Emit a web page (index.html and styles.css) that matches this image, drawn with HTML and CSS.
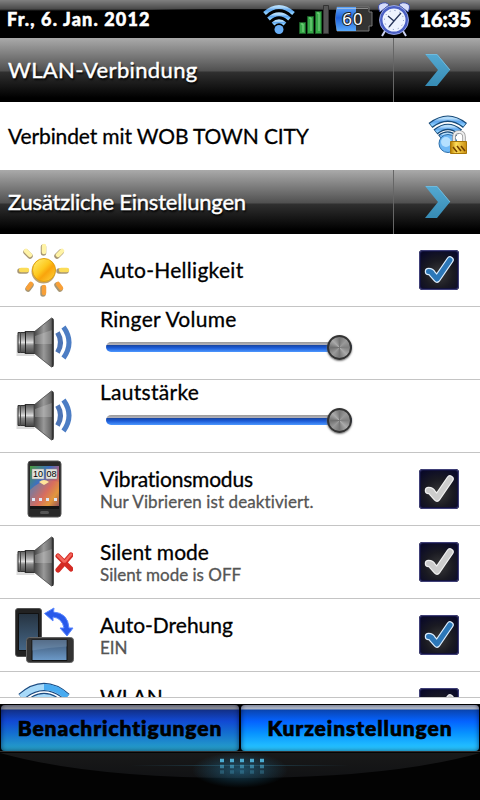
FILE: index.html
```html
<!DOCTYPE html>
<html lang="de">
<head>
  <meta charset="UTF-8">
  <meta name="viewport" content="width=device-width, initial-scale=1.0">
  <title>Kurzeinstellungen</title>
  <link rel="stylesheet" href="styles.css">
</head>
<body>
  <svg class="defs" width="0" height="0">
    <defs>
      <linearGradient id="blue" x1="0" y1="0" x2="0" y2="1">
        <stop offset="0" stop-color="#b4dcfa"/><stop offset=".5" stop-color="#5ca4ee"/><stop offset="1" stop-color="#8dcfff"/>
      </linearGradient>
      <linearGradient id="arrow" x1="0" y1="0" x2="0" y2="1">
        <stop offset="0" stop-color="#54a9d2"/><stop offset="1" stop-color="#368bb4"/>
      </linearGradient>
      <linearGradient id="metal" x1="0" y1="0" x2="0" y2="1">
        <stop offset="0" stop-color="#555"/><stop offset=".35" stop-color="#aaa"/><stop offset=".5" stop-color="#ddd"/><stop offset=".62" stop-color="#888"/><stop offset="1" stop-color="#444"/>
      </linearGradient>
      <linearGradient id="cone" x1="0" y1="0" x2="1" y2="0">
        <stop offset="0" stop-color="#444"/><stop offset=".5" stop-color="#999"/><stop offset="1" stop-color="#555"/>
      </linearGradient>
      <linearGradient id="screen" x1="0" y1="0" x2="0" y2="1">
        <stop offset="0" stop-color="#3d5470"/><stop offset="1" stop-color="#6c9ac9"/>
      </linearGradient>
      <linearGradient id="darkscreen" x1="0" y1="0" x2="0" y2="1">
        <stop offset="0" stop-color="#263340"/><stop offset="1" stop-color="#456686"/>
      </linearGradient>
      <linearGradient id="sunfill" x1="0" y1="0" x2="1" y2="1">
        <stop offset="0" stop-color="#fff27a"/><stop offset=".45" stop-color="#fdc81e"/><stop offset=".6" stop-color="#f9a40c"/><stop offset="1" stop-color="#ffd83c"/>
      </linearGradient>
      <linearGradient id="wall" x1="0" y1="0" x2="1" y2="1">
        <stop offset="0" stop-color="#4a9a3a"/><stop offset=".35" stop-color="#3d6fc4"/><stop offset=".6" stop-color="#c65a6a"/><stop offset=".8" stop-color="#d8a030"/><stop offset="1" stop-color="#5a3060"/>
      </linearGradient>
      <linearGradient id="battery" x1="0" y1="0" x2="0" y2="1">
        <stop offset="0" stop-color="#5da4f8"/><stop offset=".45" stop-color="#1f62dc"/><stop offset="1" stop-color="#59a9fa"/>
      </linearGradient>
      <linearGradient id="gold" x1="0" y1="0" x2="1" y2="0">
        <stop offset="0" stop-color="#b77b00"/><stop offset=".35" stop-color="#ffe05a"/><stop offset="1" stop-color="#c98d10"/>
      </linearGradient>

      <symbol id="chevron" viewBox="0 0 26 32">
        <path d="M0 0h12l13 16-13 16H0l13-16z" fill="url(#arrow)"/>
        <path d="M1 .5h11l13 15.500" fill="none" stroke="#6fbadd"/>
      </symbol>

      <symbol id="speaker" viewBox="0 0 58 58">
        <path d="M2.500 19v21h18V18z" fill="#999" opacity=".35" transform="translate(-1 2)"/>
        <path d="M3 18.500h7v-1h10v22H10v-1H3z" fill="url(#metal)" stroke="#333"/>
        <path d="M10.500 18v21" stroke="#222"/>
        <path d="M5.500 18v21" stroke="#444"/>
        <path d="M19 18L36.500 4q2 0 2 3v43q0 3-2 3L19 39z" fill="url(#cone)" stroke="#444" stroke-width=".8"/>
        <path d="M20 22l17-6v14H20z" fill="#ddd" opacity=".28"/>
        <path d="M37.500 5v48" stroke="#333" stroke-width="1.500"/>
      </symbol>

      <symbol id="waves" viewBox="0 0 58 58">
        <g fill="none" stroke-width="5">
          <path d="M42.500 18.500q6 10 0 20" stroke="#4c74b5"/>
          <path d="M48.500 13q11 15.500 0 31" stroke="#4c7dc4"/>
        </g>
      </symbol>

      <symbol id="wifi" viewBox="0 0 32 32">
        <g fill="none" stroke="url(#blue)" stroke-width="4">
          <path d="M1.500 10.500Q16-2.500 30.500 10.500"/>
          <path d="M5.500 16Q16 6.500 26.500 16"/>
          <path d="M10 21q6-5.500 12 0"/>
        </g>
        <circle cx="16" cy="26.500" r="4.500" fill="#68adf4"/>
      </symbol>

      <symbol id="tick" viewBox="0 0 40 40">
        <path d="M9.500 21.500q3 0 4 2.500l4.500 5L31 10" fill="none" stroke-width="7.500" stroke-linejoin="round" stroke-linecap="round"/>
        <path d="M9.500 21.500q3 0 4 2.500l4.500 5L31 10" fill="none" stroke="currentColor" stroke-width="5" stroke-linejoin="round" stroke-linecap="round"/>
      </symbol>
    </defs>
  </svg>

  <div class="statusbar">
    <span class="date">Fr., 6. Jan. 2012</span>
    <div class="status-icons">
      <svg width="32" height="32"><use href="#wifi"/></svg>
      <svg width="32" height="30" viewBox="0 0 32 30">
        <g stroke="#1c5c28" fill="#35a747">
          <path d="M.5 18.500h6v11h-6z"/><path d="M8.500 12.500h6v17h-6z"/><path d="M16.500 7.500h6v22h-6z"/>
        </g>
        <path d="M24.500 1.500h5v28h-5z" fill="#555" stroke="#333"/>
        <path d="M2 20h2v8M10 14h2v13M18 9h2v18" fill="none" stroke="#83d889"/>
      </svg>
      <svg width="38" height="28" viewBox="0 0 38 28">
        <path d="M2 2h32v5h3v14h-3v5H2q-3-12 0-24" fill="#333" stroke="#777"/>
        <path d="M2 2h19v24H2q-3-12 0-24" fill="url(#battery)"/>
        <path d="M2 3.500h31" stroke="#ddd" opacity=".5"/>
        <text x="18" y="20" class="battery-text">60</text>
      </svg>
      <svg width="34" height="36" viewBox="0 0 34 36">
        <g stroke="#4152ac" fill="#d6dcfa">
          <path d="M3 11Q0 5 3 3q6-3 9 1z"/><path d="M31 11q3-6 0-8-6-3-9 1z"/>
        </g>
        <path d="M8 30l-3 5M26 30l3 5" stroke="#cbd2f2" stroke-width="2"/>
        <circle cx="17" cy="19" r="13" fill="#eef3ff" stroke="#4a5fc4" stroke-width="3"/>
        <circle cx="17" cy="19" r="14.500" fill="none" stroke="#aebcf5" stroke-width=".8"/>
        <circle cx="17" cy="19" r="9.500" fill="none" stroke="#7788b8" stroke-dasharray="1 4"/>
        <path d="M11 15l6 5 7-8M17 20l-5 6" fill="none" stroke="#28365c" stroke-width="1.300"/>
      </svg>
    </div>
    <span class="clock">16:35</span>
  </div>

  <div class="section-header">
    <h2 class="t-wlan">WLAN-Verbindung</h2>
    <div class="more"><svg width="26" height="32"><use href="#chevron"/></svg></div>
  </div>

  <div class="connection">
    <span>Verbindet mit WOB TOWN CITY</span>
    <svg width="40" height="42" viewBox="0 0 40 42">
      <g fill="none" stroke="#174a78" stroke-width="6.500">
        <path d="M2.500 10.500Q20-3 37 10.500"/><path d="M7.500 17Q20 7 32 17"/><path d="M12 22.500q8-6 15 0"/>
      </g>
      <g fill="none" stroke="url(#blue)" stroke-width="3.800">
        <path d="M3 10Q20-3 36.500 10"/><path d="M8 16.500Q20 7 31.500 16.500"/><path d="M12.500 22q7-5 14 0"/>
      </g>
      <circle cx="20" cy="28.500" r="9" fill="#70b9f5" stroke="#2a6daa"/>
      <circle cx="18" cy="27" r="5" fill="#b4e0ff"/>
      <path d="M26 27v-5q0-5 5-5t5 5v5" fill="none" stroke="#999" stroke-width="3.500"/>
      <path d="M26 27v-5q0-5 5-5t5 5v5" fill="none" stroke="#eee" stroke-width="1.800"/>
      <path d="M22.500 26.500h16v12h-16z" fill="url(#gold)" stroke="#a87708"/>
      <path d="M25 32l4 5M29 31l4 5M33 31l4 5" stroke="#744100" stroke-width="1.600"/>
    </svg>
  </div>

  <div class="section-header">
    <h2 class="t-extra">Zusätzliche Einstellungen</h2>
    <div class="more"><svg width="26" height="32"><use href="#chevron"/></svg></div>
  </div>

  <div class="settings">
    <div class="row">
      <svg class="icon" viewBox="0 0 58 58">
        <g stroke-linecap="round" stroke-width="5.500" stroke="#8a7445" opacity=".75">
          <path d="M28.500 6v6M42 15l4-4M44 30h7M42 44l3 4M28 47v6M16 44l-3 4M5 30h6M15 15l-4-4"/>
        </g>
        <g stroke-linecap="round" stroke-width="4.500">
          <path d="M29 5v6M43 14l4-4M15 14l-4-4" stroke="#fff3a6"/>
          <path d="M46 29h6M6 29h6" stroke="#fbdc58"/>
          <path d="M43 43l3 4M29 46v6M16 43l-3 4" stroke="#f8a038"/>
        </g>
        <circle cx="28.500" cy="30.500" r="12" fill="#a07930" opacity=".7"/>
        <circle cx="29" cy="29" r="11.500" fill="url(#sunfill)" stroke="#e2a10f"/>
      </svg>
      <div class="label"><span class="title wide-text">Auto-Helligkeit</span></div>
      <span class="check on"><svg width="40" height="40"><use href="#tick"/></svg></span>
    </div>

    <div class="row volume">
      <svg class="icon" viewBox="0 0 58 58"><use href="#speaker"/><use href="#waves"/></svg>
      <div class="label">
        <span class="title wide-text">Ringer Volume</span>
        <div class="slider"><span class="thumb"></span></div>
      </div>
    </div>

    <div class="row volume">
      <svg class="icon" viewBox="0 0 58 58"><use href="#speaker"/><use href="#waves"/></svg>
      <div class="label">
        <span class="title wide-text">Lautstärke</span>
        <div class="slider"><span class="thumb"></span></div>
      </div>
    </div>

    <div class="row">
      <svg class="icon" viewBox="0 0 58 58">
        <rect x="13" y="1" width="33" height="56" rx="3" fill="#292929" stroke="#555"/>
        <path d="M15 6h29v40H15z" fill="url(#wall)"/>
        <path d="M15 30q14-14 29-8v24H15z" fill="#f08a50" opacity=".4"/>
        <path d="M17 9h12v10H17zM31 9h11v10H31z" fill="#e4e6df" stroke="#888" stroke-width=".5"/>
        <text x="23" y="17" class="phone-clock">10</text>
        <text x="36.500" y="17" class="phone-clock">08</text>
        <path d="M24 22q5-4 10 0l-5 3z" fill="#ffe59a"/>
        <path d="M17 38h3v3h-3zM24 38h3v3h-3zM31 38h3v3h-3zM39 38h3v3h-3z" fill="#dfe6f5"/>
        <path d="M15 46h29v3H15z" fill="#151515"/>
        <rect x="25" y="51" width="9" height="3" rx="1.500" fill="#555"/>
      </svg>
      <div class="label">
        <span class="title t-vibra">Vibrationsmodus</span>
        <span class="sub t-deactivated">Nur Vibrieren ist deaktiviert.</span>
      </div>
      <span class="check"><svg width="40" height="40"><use href="#tick"/></svg></span>
    </div>

    <div class="row">
      <svg class="icon" viewBox="0 0 58 58">
        <use href="#speaker"/>
        <path d="M43 23l13 13M56 22L43 37" stroke="#d42b24" stroke-width="5" stroke-linecap="round"/>
        <path d="M43 22.500l6 6M56 21.500l-6 7" stroke="#f4665c" stroke-width="2.500" stroke-linecap="round"/>
      </svg>
      <div class="label">
        <span class="title">Silent mode</span>
        <span class="sub">Silent mode is OFF</span>
      </div>
      <span class="check"><svg width="40" height="40"><use href="#tick"/></svg></span>
    </div>

    <div class="row">
      <svg class="icon wide" viewBox="0 0 61 58">
        <rect x=".5" y="2.500" width="26" height="48" rx="2.500" fill="#222" stroke="#555"/>
        <path d="M3.500 7.500h20v37h-20z" fill="url(#darkscreen)" stroke="#111"/>
        <rect x="11.500" y="31.500" width="47" height="25" rx="3" fill="#333" stroke="#666"/>
        <path d="M17 33.500h35v21H17z" fill="url(#screen)" stroke="#111"/>
        <path d="M17 33.500h35v7q-18 1-35 4z" fill="#9db5cb" opacity=".25"/>
        <path d="M29.500 7.500L39 2l-.5 4Q53 7 54 22h4l-6 8-7-8h4Q47 12 38 11v4z" fill="#2859ea" stroke="#5a87ff"/>
      </svg>
      <div class="label">
        <span class="title">Auto-Drehung</span>
        <span class="sub">EIN</span>
      </div>
      <span class="check on"><svg width="40" height="40"><use href="#tick"/></svg></span>
    </div>

    <div class="row last">
      <svg class="icon" viewBox="0 0 58 58">
        <g fill="none" stroke="#1b4a80" stroke-width="8"><path d="M6 18q23-20 46 0"/><path d="M13 25q16-14 32 0"/></g>
        <g fill="none" stroke="#a8daf9" stroke-width="6"><path d="M6 18q23-20 46 0"/><path d="M13 25q16-14 32 0"/></g>
        <path d="M29 8q13 0 23 10" fill="none" stroke="#48abf0" stroke-width="6"/>
      </svg>
      <div class="label">
        <span class="title">WLAN</span>
      </div>
      <span class="check"><svg width="40" height="40"><use href="#tick"/></svg></span>
    </div>
  </div>

  <div class="tabs">
    <div class="tab"><span>Benachrichtigungen</span></div>
    <div class="tab active"><span>Kurzeinstellungen</span></div>
  </div>

  <div class="handle">
    <svg width="480" height="49" viewBox="0 0 480 49">
      <defs>
        <radialGradient id="glow"><stop offset="0" stop-color="#2987b6" stop-opacity=".5"/><stop offset="1" stop-color="#2987b6" stop-opacity="0"/></radialGradient>
        <linearGradient id="gloss" x1="0" y1="0" x2="0" y2="1"><stop offset="0" stop-color="#191919"/><stop offset="1" stop-color="#111214"/></linearGradient>
        <linearGradient id="beam" gradientUnits="userSpaceOnUse" x1="130" y1="0" x2="350" y2="0"><stop offset="0" stop-color="#2f738e" stop-opacity="0"/><stop offset=".5" stop-color="#2f738e"/><stop offset="1" stop-color="#2f738e" stop-opacity="0"/></linearGradient>
      </defs>
      <path d="M0 1h480Q390 26 240 26 90 26 0 1" fill="url(#gloss)"/>
      <ellipse cx="240" cy="18" rx="48" ry="18" fill="url(#glow)"/>
      <path d="M130 13.500h220" stroke="url(#beam)" opacity=".5"/>
      <g stroke="#4cacd2" stroke-width="3.500" stroke-dasharray="4 6">
        <path d="M220 8.500h44"/><path d="M220 14.500h44" opacity=".6"/><path d="M220 20h44" opacity=".3"/>
      </g>
    </svg>
  </div>
</body>
</html>
```
FILE: styles.css
```css
* {
  box-sizing: border-box;
}

body {
  margin: 0;
  width: 480px;
  height: 800px;
  display: flex;
  flex-direction: column;
  overflow: hidden;
  background: #fff;
  color: #000;
  font-family: Lato, "Open Sans", sans-serif;
  font-variant-ligatures: none;
  white-space: nowrap;
}

svg {
  display: block;
  flex: none;
}

.defs {
  position: absolute;
}

/* status bar */
.statusbar {
  height: 38px;
  flex: none;
  display: flex;
  align-items: center;
  padding: 0 9px 0 7px;
  color: #fff;
  font-weight: 900;
  background:
    radial-gradient(ellipse 400px 20px at 240px 29px, #000 97%, transparent 100%),
    linear-gradient(#808080, #4a4a4a 9px, #000 11px, #000 31px, #333);
}

.date {
  font-size: 18px;
  line-height: 38px;
  letter-spacing: 1.15px;
  width: 256px;
  -webkit-text-stroke: .5px #fff;
}

.status-icons {
  display: flex;
  align-items: center;
  gap: 4px;
}

.clock {
  font-size: 20px;
  margin-left: auto;
  -webkit-text-stroke: .6px #fff;
}

.battery-text {
  fill: #fff;
  stroke: #222;
  stroke-width: 2px;
  paint-order: stroke;
  font: 17px "Noto Sans", sans-serif;
  letter-spacing: 1px;
  text-anchor: middle;
}

/* black section headers */
.section-header {
  height: 64px;
  flex: none;
  display: flex;
  align-items: center;
  justify-content: space-between;
  padding-left: 8px;
  color: #fff;
  background: linear-gradient(#aaa 0, #505050 33px, #303030 34px, #000 60px);
}

.section-header h2 {
  margin: 0;
  padding-bottom: 2px;
  font-size: 22px;
  font-weight: 400;
  -webkit-text-stroke: .4px #fff;
  text-shadow: 1px 2px 2px #000;
}

.t-wlan {
  letter-spacing: .35px;
}

.t-extra {
  letter-spacing: -.2px;
}

.more {
  width: 87px;
  height: 64px;
  display: flex;
  align-items: center;
  padding-left: 31px;
  border-left: 1px solid #666;
}

.connection {
  height: 68px;
  flex: none;
  display: flex;
  align-items: center;
  justify-content: space-between;
  padding: 0 12px 0 8px;
  font-size: 21px;
  letter-spacing: -.12px;
  -webkit-text-stroke: .3px #000;
}

.connection span {
  padding-bottom: 2px;
}

/* settings list */
.settings {
  height: 464px;
  flex: none;
  overflow: hidden;
  border-bottom: 1px solid #c4c4c4;
}

.row {
  height: 73px;
  display: flex;
  align-items: center;
  padding: 0 21px 0 15px;
  border-bottom: 1px solid #c4c4c4;
}

.icon {
  width: 58px;
  height: 58px;
  margin-right: 27px;
}

.icon.wide {
  width: 61px;
  margin-right: 24px;
}

.label {
  flex: 1;
  display: flex;
  flex-direction: column;
  padding-bottom: 1px;
}

.title {
  font-size: 21px;
  line-height: 26px;
  -webkit-text-stroke: .3px #000;
}

.wide-text {
  letter-spacing: .28px;
}

.t-vibra {
  letter-spacing: -.2px;
}

.sub {
  font-size: 17px;
  line-height: 20px;
  color: #555;
  -webkit-text-stroke: .3px #555;
}

.t-deactivated {
  letter-spacing: .1px;
}

.volume .label {
  height: 72px;
}

.volume .title {
  line-height: 24px;
}

.last .label {
  padding-bottom: 22px;
}

.slider {
  width: 246px;
  height: 10px;
  flex: none;
  margin: 11px 0 0 6px;
  display: flex;
  align-items: center;
  justify-content: flex-end;
  border-radius: 5px;
  background: linear-gradient(#999 0, #b0b0b8 25%, #1848a8 35%, #1c5cd8 60%, #4d98ff 100%);
}

.thumb {
  width: 25px;
  height: 25px;
  border: 2px solid #333;
  border-radius: 50%;
  background: conic-gradient(#777, #999, #808080, #aaa, #777, #999, #707070, #aaa, #777);
  box-shadow: 0 1px 2px #777;
}

.check {
  width: 40px;
  height: 40px;
  border-radius: 4px;
  background: radial-gradient(circle at 50% 60%, #3a3a3a 0, #1a1a22 45%, #090928 85%);
  box-shadow: inset 0 0 0 1px #404078, inset 0 0 0 2px #12123c;
  color: #ccc;
  stroke: #f0f0f0;
}

.check.on {
  color: #2c77b8;
  stroke: #dceeff;
}

.phone-clock {
  font: 9px "Liberation Sans", sans-serif;
  text-anchor: middle;
}

/* bottom tabs */
.tabs {
  height: 47px;
  margin-top: 6px;
  flex: none;
  display: flex;
  background: #000;
}

.tab {
  flex: 1;
  height: 46px;
  margin: 1px 1px 0;
  display: flex;
  align-items: center;
  justify-content: center;
  border-radius: 4px;
  padding-bottom: 2px;
  font-size: 21px;
  font-weight: 900;
  letter-spacing: .95px;
  -webkit-text-stroke: .7px #000;
  box-shadow: inset 0 0 5px rgba(0, 0, 40, .6);
  background: linear-gradient(#8c9099 4px, #123088 5px, #1149d4 35%, #1470d0 62%, #28a5c8 100%);
}

.tab.active {
  background: linear-gradient(#b4bdcc 4px, #0a45b0 5px, #0462ff 35%, #0894ff 62%, #2ccdff 100%);
}

.handle {
  height: 49px;
  flex: none;
  background: #030303;
  border-top: 1px solid #303030;
}
```
